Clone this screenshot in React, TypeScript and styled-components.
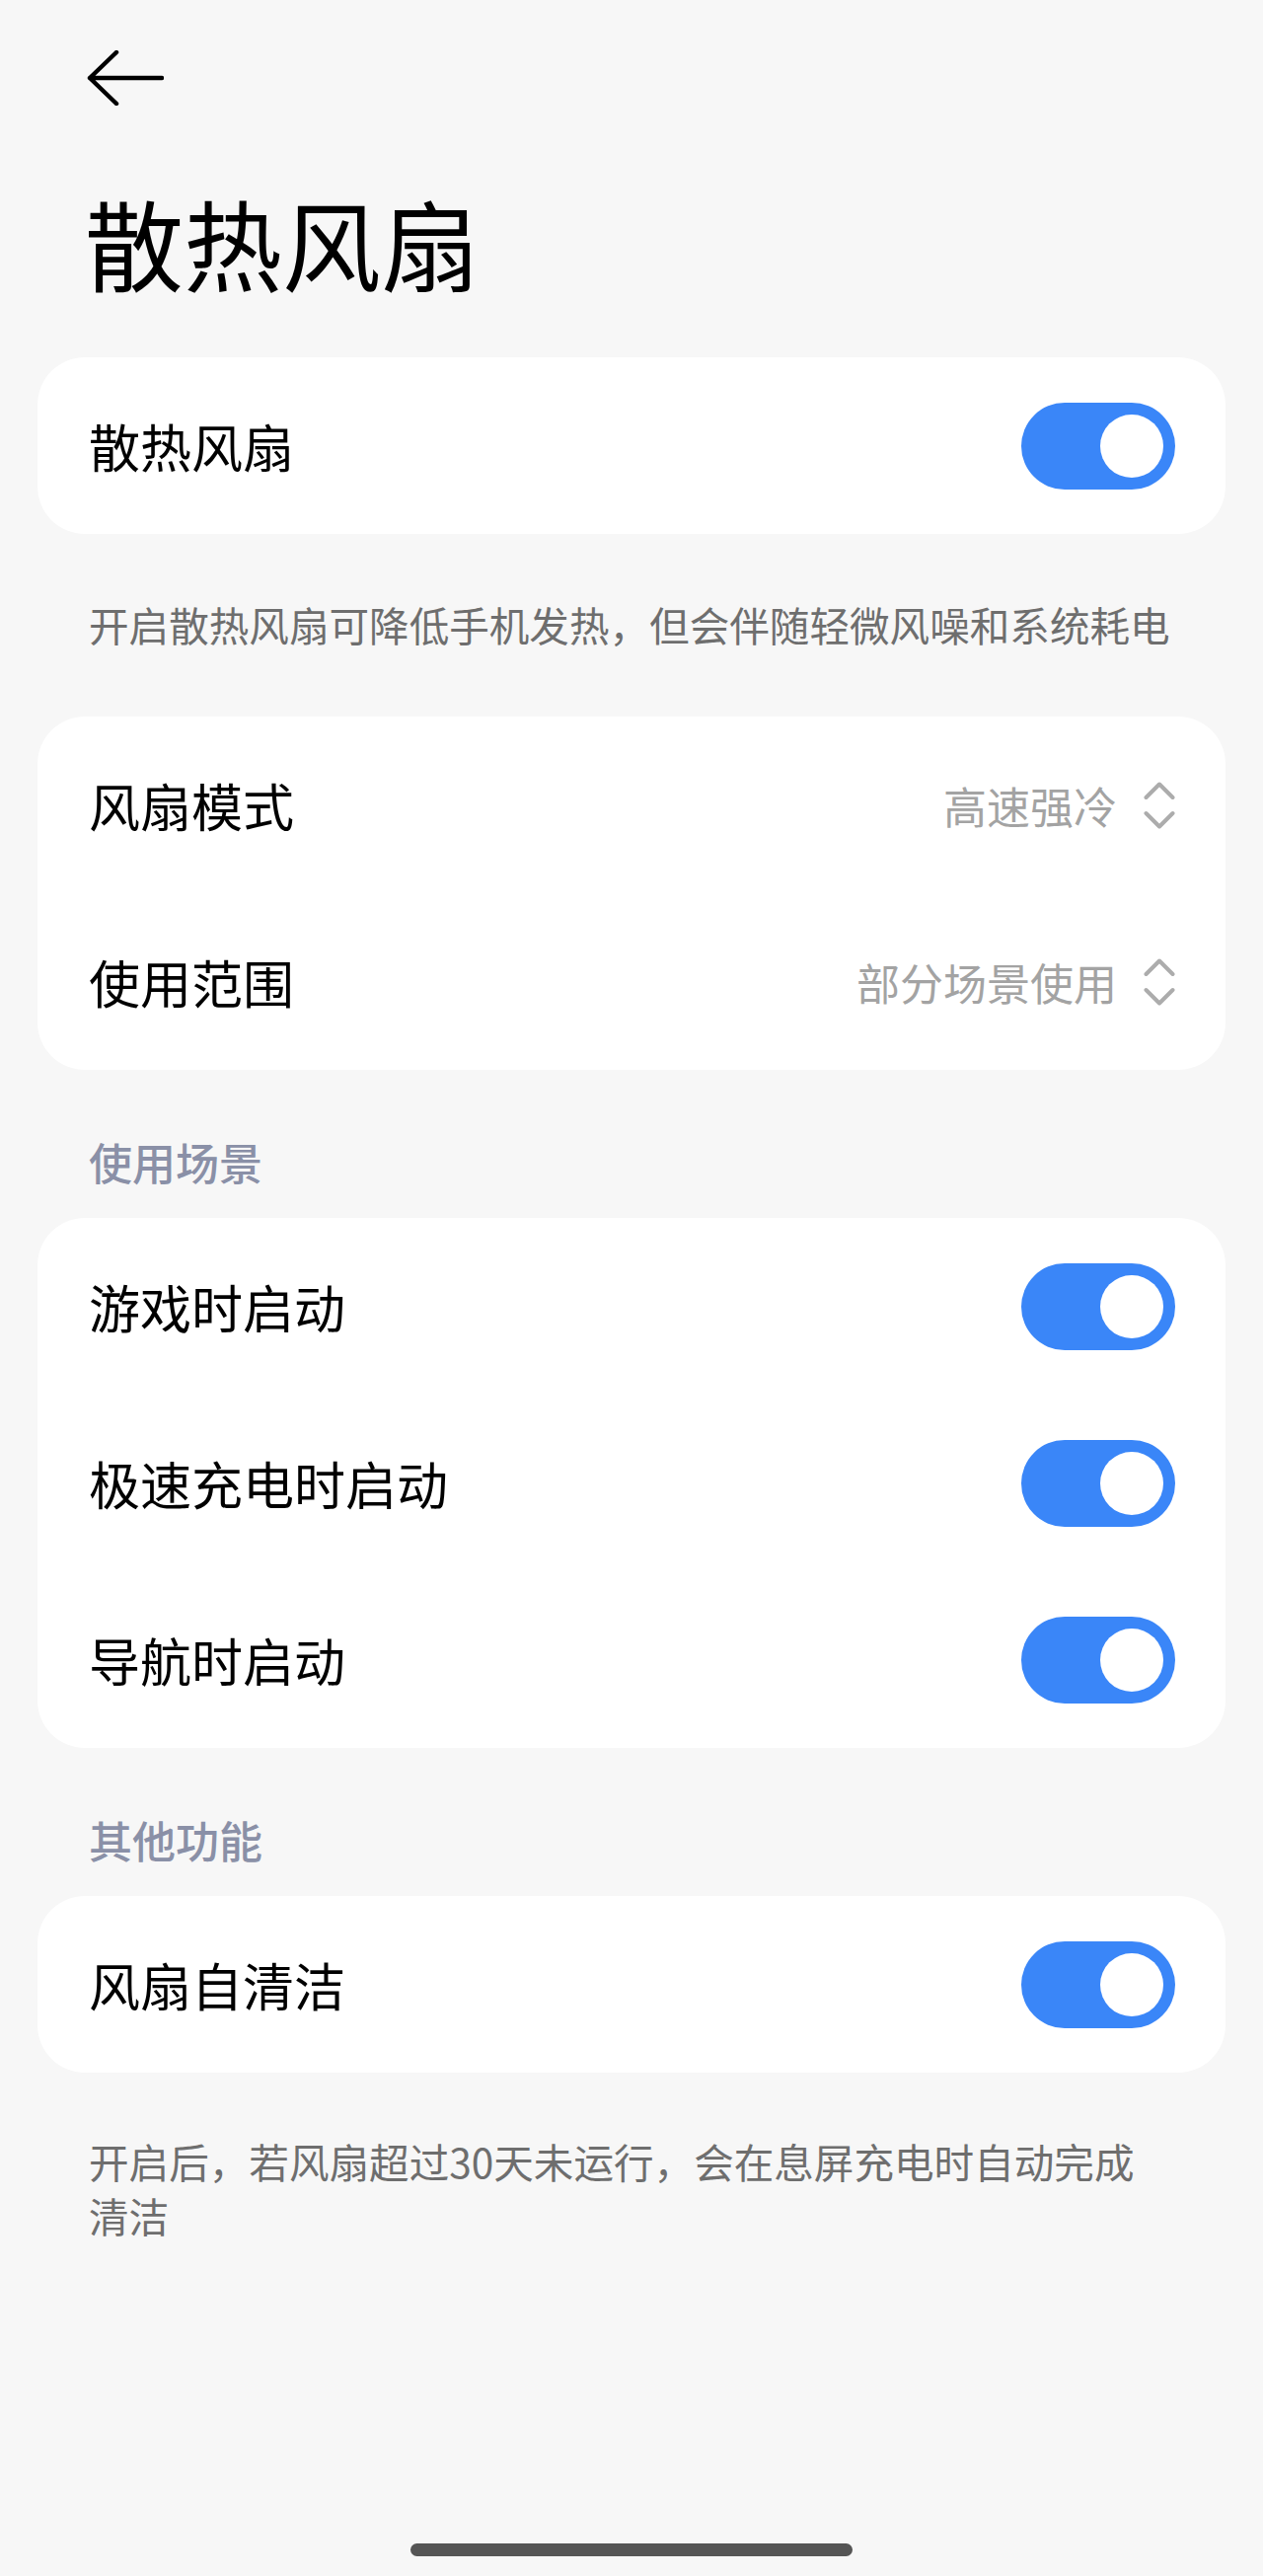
import React from 'react';
import styled, { createGlobalStyle } from 'styled-components';

const GlobalStyle = createGlobalStyle`
  html, body {
    margin: 0;
    padding: 0;
    background: #f7f7f7;
  }
  body {
    font-family: "Noto Sans CJK SC", "Noto Sans", sans-serif;
    color: #000;
  }
`;

const Screen = styled.div`
  width: 1280px;
  min-height: 2610px;
  box-sizing: border-box;
  padding: 0 38px 20px;
  display: flex;
  flex-direction: column;
  background: #f7f7f7;
`;

const TopBar = styled.div`
  height: 158px;
  display: flex;
  align-items: center;
  padding-left: 50px;
`;

const BackButton = styled.button`
  border: 0;
  background: none;
  padding: 0;
  display: flex;
  cursor: pointer;
`;

const Title = styled.h1`
  margin: 17px 0 47px 48px;
  font-size: 100px;
  line-height: 140px;
  font-weight: 400;
`;

const Card = styled.div`
  background: #fff;
  border-radius: 48px;
  display: flex;
  flex-direction: column;
`;

const Row = styled.div`
  height: 179px;
  box-sizing: border-box;
  padding: 0 51px 0 52px;
  display: flex;
  align-items: center;
  justify-content: space-between;
`;

const Label = styled.span`
  font-size: 52px;
  font-weight: 400;
  line-height: 70px;
`;

const ValueBox = styled.div`
  display: flex;
  align-items: center;
  gap: 27px;
`;

const Value = styled.span`
  font-size: 44px;
  line-height: 60px;
  color: #a3a3a3;
`;

const Toggle = styled.div<{ $on: boolean }>`
  width: 156px;
  height: 88px;
  border-radius: 44px;
  box-sizing: border-box;
  padding: 12px;
  display: flex;
  justify-content: ${(p) => (p.$on ? 'flex-end' : 'flex-start')};
  background: ${(p) => (p.$on ? '#3a86f8' : '#e5e5e5')};
`;

const Knob = styled.div`
  width: 64px;
  height: 64px;
  border-radius: 50%;
  background: #fff;
`;

const Note = styled.p<{ $top: number; $bottom: number }>`
  margin: 0;
  padding: ${(p) => p.$top}px 38px ${(p) => p.$bottom}px 52px;
  font-size: 40.6px;
  line-height: 55px;
  color: #6e6e6e;
`;

const SectionTitle = styled.div`
  padding: 63px 0 27px 52px;
  font-size: 44px;
  line-height: 60px;
  font-weight: 500;
  color: #8a90a7;
`;

const HomeBar = styled.div`
  margin: auto auto 0;
  width: 448px;
  height: 13px;
  border-radius: 7px;
  background: #555;
`;

function BackArrow() {
  return (
    <svg width="78" height="56" viewBox="0 0 78 56" fill="none">
      <path
        d="M3 28 H76 M30 2 L3 28 L30 54"
        stroke="#000"
        strokeWidth="4.5"
        strokeLinecap="round"
        strokeLinejoin="round"
      />
    </svg>
  );
}

function UpDown() {
  return (
    <svg width="32" height="50" viewBox="0 0 32 50" fill="none">
      <path
        d="M2.5 17 L16 3.5 L29.5 17 M2.5 33 L16 46.5 L29.5 33"
        stroke="#acacac"
        strokeWidth="4"
        strokeLinecap="round"
        strokeLinejoin="round"
      />
    </svg>
  );
}

function SwitchRow({ label, on = true }: { label: string; on?: boolean }) {
  return (
    <Row>
      <Label>{label}</Label>
      <Toggle $on={on}>
        <Knob />
      </Toggle>
    </Row>
  );
}

function SelectRow({ label, value }: { label: string; value: string }) {
  return (
    <Row>
      <Label>{label}</Label>
      <ValueBox>
        <Value>{value}</Value>
        <UpDown />
      </ValueBox>
    </Row>
  );
}

export default function App() {
  return (
    <>
      <GlobalStyle />
      <Screen>
        <TopBar>
          <BackButton aria-label="返回">
            <BackArrow />
          </BackButton>
        </TopBar>
        <Title>散热风扇</Title>

        <Card>
          <SwitchRow label="散热风扇" />
        </Card>
        <Note $top={64} $bottom={66}>
          开启散热风扇可降低手机发热，但会伴随轻微风噪和系统耗电
        </Note>

        <Card>
          <SelectRow label="风扇模式" value="高速强冷" />
          <SelectRow label="使用范围" value="部分场景使用" />
        </Card>

        <SectionTitle>使用场景</SectionTitle>
        <Card>
          <SwitchRow label="游戏时启动" />
          <SwitchRow label="极速充电时启动" />
          <SwitchRow label="导航时启动" />
        </Card>

        <SectionTitle>其他功能</SectionTitle>
        <Card>
          <SwitchRow label="风扇自清洁" />
        </Card>
        <Note $top={62} $bottom={0}>
          开启后，若风扇超过30天未运行，会在息屏充电时自动完成
          <br />
          清洁
        </Note>

        <HomeBar />
      </Screen>
    </>
  );
}
